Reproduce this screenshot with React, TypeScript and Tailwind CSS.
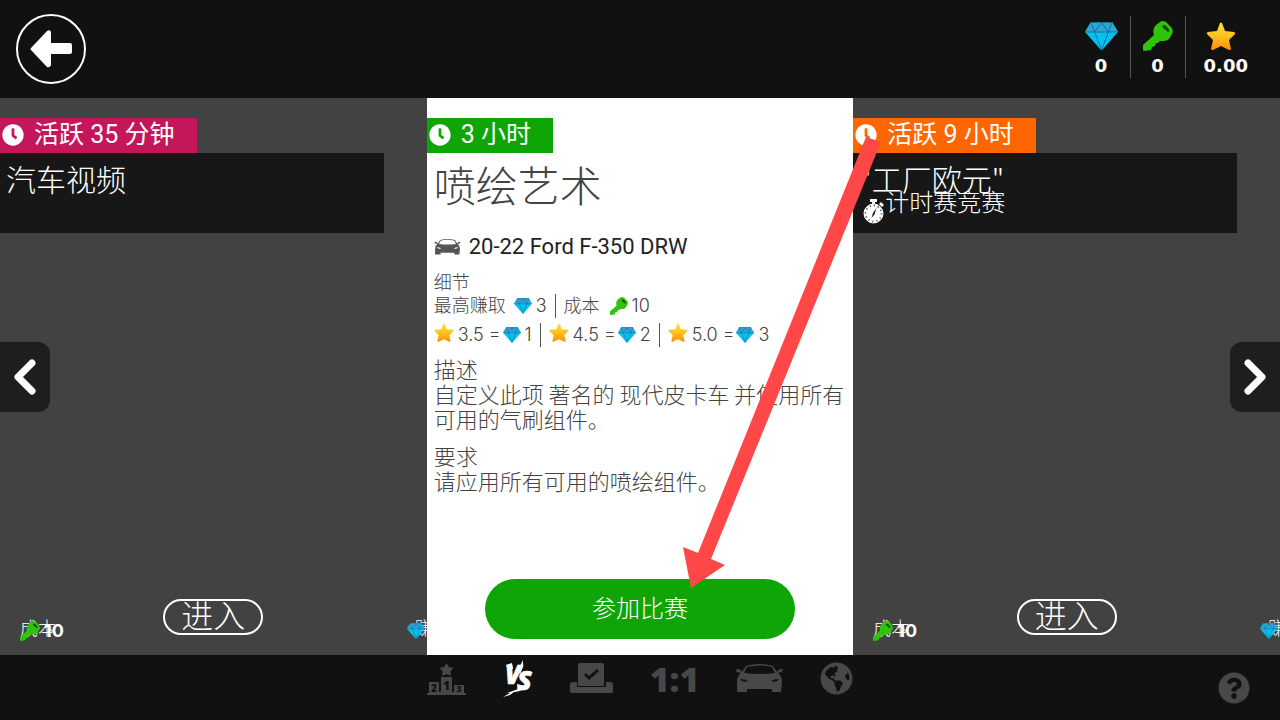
import React from 'react';
import { FaClock, FaGlobeAmericas, FaQuestionCircle } from 'react-icons/fa';

interface IconProps {
  className?: string;
}

const cjk = "font-['Noto_Sans_CJK_SC',sans-serif]";

const DiamondIcon: React.FC<IconProps> = ({ className }) => (
  <svg viewBox="0 0 33 28" className={className} aria-hidden="true">
    <path d="M6 0H27L33 10L17 28H16L0 10Z" fill="#08bff0" />
    <path d="M6 0H27L33 10H0Z" fill="#2da5d8" />
    <path
      d="M0.500 10H32.500M6 .500L9.500 10L16.500 27.500L23.500 10L27 .500M9.500 10L16.500 1L23.500 10M6 .500H27"
      fill="none"
      stroke="#0d6688"
      strokeWidth=".8"
    />
  </svg>
);

const KeyIcon: React.FC<IconProps> = ({ className }) => (
  <svg viewBox="0 0 30 30" className={className} aria-hidden="true">
    <path
      d="M13 4L17 1Q20-1 23 1L28 6Q31 9 29 13L26 18Q24 20 21 20L17 20L15 22L13 22L12 25L9 26L8 29L1 30L0 29L0 24L11 14Q9 8 13 4Z"
      fill="#2dc40a"
    />
    <path d="M19.500 4.500Q21 3 23 5L26 8.500Q27 10.500 25 11Q23 9 19.500 6.500Z" fill="#0c4d05" />
  </svg>
);

const StarIcon: React.FC<IconProps> = ({ className }) => (
  <svg viewBox="0 0 30 28" className={className} aria-hidden="true">
    <defs>
      <linearGradient id="gold" x1="0" y1="0" x2="0" y2="1">
        <stop offset="0" stopColor="#ffdf3a" />
        <stop offset=".45" stopColor="#ffc423" />
        <stop offset="1" stopColor="#ff8f00" />
      </linearGradient>
    </defs>
    <path
      d="M14 1Q15 0 16 1L19 9L28 10Q30 11 29 12L23 18L25 27Q25 28 23 28L15 24L7 28Q5 28 5 27L7 18L1 12Q0 11 2 10L11 9Z"
      fill="url(#gold)"
    />
  </svg>
);

const CarIcon: React.FC<IconProps> = ({ className }) => (
  <svg viewBox="0 0 47 29" className={className} fill="currentColor" aria-hidden="true">
    <path
      fillRule="evenodd"
      d="M10 2Q23-2 37 2L41 8Q42 5 46 5Q48 7 45 8L42 9Q46 12 46 18L45 28H36V25H11V28H1L1 18Q1 12 5 9L1 8Q-1 6 1 5Q5 5 6 8ZM11 3L8 9Q23 11 39 9L36 3Q23 0 11 3ZM4 15Q6 19 12 17Q10 15 4 15ZM43 15Q41 19 35 17Q37 15 43 15Z"
    />
  </svg>
);

const PodiumIcon: React.FC<IconProps> = ({ className }) => (
  <svg viewBox="0 0 39 32" className={className} fill="currentColor" aria-hidden="true">
    <path d="M19.500 0L21.800 4L26.500 5L23.400 8.400L24 13L19.500 11L15 13L15.600 8.400L12.500 5L17.200 4Z" />
    <path d="M0 30H2V19H12V29H14V14H25V29H27V22H37V30H39V32H0Z" />
    <g fill="#111" fontFamily="Open Sans, sans-serif" fontWeight="800" textAnchor="middle">
      <text x="7" y="28.500" fontSize="10">2</text>
      <text x="19.500" y="27" fontSize="12">1</text>
      <text x="32" y="29" fontSize="8">3</text>
    </g>
  </svg>
);

const VersusIcon: React.FC<IconProps> = ({ className }) => (
  <svg viewBox="0 0 30 37" className={className} fill="currentColor" aria-hidden="true">
    <g fontFamily="Open Sans, sans-serif" fontStyle="italic" fontWeight="800" stroke="currentColor" strokeWidth=".6">
      <text x="2" y="24" fontSize="26">V</text>
      <text x="14" y="30" fontSize="27">S</text>
    </g>
    <path d="M0 37L7 33L4 33L15 29L22 29Q15 32 11 32L7 35Z" />
    <path d="M15 10L20 0L20 7L17 14Z" />
    <path d="M3 5L9 3L10 9L5 9Z" />
  </svg>
);

const BallotIcon: React.FC<IconProps> = ({ className }) => (
  <svg viewBox="0 0 43 31" className={className} fill="currentColor" aria-hidden="true">
    <path
      fillRule="evenodd"
      d="M10 0H32Q34 0 34 2V23H8V2Q8 0 10 0ZM14 12L19 17L29 8L27 6L19 13L16 10Z"
    />
    <path d="M3 19H7V24H36V19H40Q43 19 43 22V28Q43 30 41 30H2Q0 30 0 28V22Q0 19 3 19Z" />
  </svg>
);

const StopwatchIcon: React.FC<IconProps> = ({ className }) => (
  <svg viewBox="0 0 22 25" className={className} aria-hidden="true">
    <path d="M7 0H14V3H12V5H9V3H7ZM16 5L18 3L21 6L19 8Z" fill="#fff" />
    <circle cx="10.500" cy="14.500" r="9.500" fill="#fff" stroke="#fff" />
    <circle cx="10.500" cy="14.500" r="8" fill="none" stroke="#171717" strokeWidth="1.500" strokeDasharray="1 3.190" />
    <path d="M13.500 9L11.500 15.500L8.500 19L10 14Z" fill="#171717" />
  </svg>
);

const Tag: React.FC<{ color: string; children: React.ReactNode }> = ({ color, children }) => (
  <div className={`mt-5 flex h-[35px] w-fit items-center gap-2.5 pb-0.5 pl-0.5 pr-[22px] text-white ${color}`}>
    <FaClock className="size-[22px]" />
    <span className="font-['Roboto','Noto_Sans_CJK_SC',sans-serif] text-[25px] leading-8">{children}</span>
  </div>
);

const SideCard: React.FC<{
  tag: string;
  color: string;
  title: string;
  subtitle?: string;
}> = ({ tag, color, title, subtitle }) => (
  <article className="relative flex flex-col items-start overflow-hidden bg-[#424242] text-white">
    <Tag color={color}>{tag}</Tag>
    <div className="h-20 w-9/10 bg-[#171717] px-1.5 pt-2.5">
      <h2 className="text-[30px] font-light leading-[30px]">{title}</h2>
      {subtitle && (
        <div className="-mt-1 flex items-start pl-1">
          <StopwatchIcon className="mt-2.5 h-[25px] w-[22px]" />
          <p className="text-2xl font-light leading-6">{subtitle}</p>
        </div>
      )}
    </div>
    <button className="mb-5 mt-auto flex h-9 w-[100px] items-center justify-center self-center rounded-full border-2 border-white pb-1.5 text-[32px] font-light leading-none">
      进入
    </button>
    <div className="absolute bottom-4 left-5 text-lg font-light leading-6">
      成本
      <KeyIcon className="absolute -bottom-0.5 left-0 size-5" />
      <span className="absolute left-6 top-1 font-['Inter',sans-serif] text-lg font-bold leading-6">10</span>
    </div>
    <div className="absolute -right-6 bottom-4 text-lg font-light leading-6">
      赚取
      <DiamondIcon className="absolute bottom-0 -left-2 h-4 w-[18px]" />
    </div>
  </article>
);

const Reward: React.FC<{ stars: string; gems: number }> = ({ stars, gems }) => (
  <span className="flex items-center">
    <StarIcon className="mb-1 mr-1 h-[19px] w-5" />
    {stars} =
    <DiamondIcon className="ml-0.5 mr-1 h-4 w-[18px]" />
    {gems}
  </span>
);

const Divider = () => <span className="mx-2 h-6 w-px bg-[#555]" />;

const Stat: React.FC<{ icon: React.ReactNode; value: string; className: string }> = ({ icon, value, className }) => (
  <div className={`flex h-[62px] flex-col items-center ${className}`}>
    <span className="flex h-10 items-center">{icon}</span>
    <span className="font-['DejaVu_Sans',sans-serif] text-lg font-bold leading-5">{value}</span>
  </div>
);

const tabs = [
  { label: 'Leaderboard', icon: <PodiumIcon className="h-8 w-[39px]" /> },
  { label: 'Versus', icon: <VersusIcon className="h-[37px] w-[30px] overflow-visible" />, active: true },
  { label: 'Vote', icon: <BallotIcon className="h-[31px] w-[43px]" /> },
  { label: 'Scale', icon: <span className="font-['Open_Sans',sans-serif] text-[34px] font-extrabold leading-8">1:1</span> },
  { label: 'Cars', icon: <CarIcon className="h-[29px] w-[47px]" /> },
  { label: 'World', icon: <FaGlobeAmericas className="size-[33px]" /> },
];

const App: React.FC = () => {
  return (
    <div className={`flex min-h-screen flex-col bg-[#111] ${cjk}`}>
      <header className="flex items-center justify-between py-3.5 pl-4 pr-8 text-white">
        <button aria-label="Back" className="flex size-[70px] items-center justify-center rounded-full border-2 border-white">
          <svg viewBox="0 0 42 38" className="h-[38px] w-[42px]" fill="currentColor" aria-hidden="true">
            <path d="M17 1Q20-1 21 2V13H40Q42 13 42 15V22Q42 24 40 24H21V35Q20 38 17 37L1 20Q0 19 1 18Z" />
          </svg>
        </button>
        <div className="mt-0.5 flex divide-x divide-[#555] self-start">
          <Stat className="pr-3" icon={<DiamondIcon className="h-7 w-[33px]" />} value="0" />
          <Stat className="px-3" icon={<KeyIcon className="size-[30px]" />} value="0" />
          <Stat className="pl-[18px]" icon={<StarIcon className="mr-2.5 h-7 w-[30px]" />} value="0.00" />
        </div>
      </header>

      <main className="relative grid flex-1 grid-cols-3">
        <SideCard tag="活跃 35 分钟" color="bg-[#c4175b]" title="汽车视频" />

        <article className="relative flex flex-col items-start bg-white text-[#444]">
          <Tag color="bg-[#0fa506]">3 小时</Tag>
          <div className="w-full px-[7px] font-light">
            <h1 className="pt-1 text-[42px] leading-[54px]">喷绘艺术</h1>
            <p className="mt-[22px] flex items-center gap-2 font-['Roboto',sans-serif] text-[22px] font-normal leading-7 text-[#222]">
              <CarIcon className="h-4 w-[27px] text-[#555]" />
              20-22 Ford F-350 DRW
            </p>
            <h3 className="mt-2.5 text-lg leading-5">细节</h3>
            <div className="flex h-[29px] items-center font-['Inter',sans-serif] text-lg">
              <span className={`pb-1 ${cjk}`}>最高赚取</span>
              <DiamondIcon className="ml-2 mr-1 h-4 w-[18px]" />3
              <Divider />
              <span className={`pb-1 ${cjk}`}>成本</span>
              <KeyIcon className="ml-2.5 mr-1 size-[18px]" />
              10
            </div>
            <div className="flex h-[29px] items-center font-['Inter',sans-serif] text-lg">
              <Reward stars="3.5" gems={1} />
              <Divider />
              <Reward stars="4.5" gems={2} />
              <Divider />
              <Reward stars="5.0" gems={3} />
            </div>
            <div className="mt-[7px] text-[22px] leading-[25px]">
              <h3>描述</h3>
              <p>自定义此项 著名的 现代皮卡车 并使用所有可用的气刷组件。</p>
              <h3 className="mt-3">要求</h3>
              <p>请应用所有可用的喷绘组件。</p>
            </div>
          </div>
          <button className="mb-4 mt-auto h-[60px] w-[310px] self-center rounded-full bg-[#0fa506] pb-1 text-2xl font-light text-white">
            参加比赛
          </button>
          {/* pointer towards the join button */}
          <svg
            viewBox="683 137 198 451"
            className="pointer-events-none absolute -right-7 top-[39px] z-20 h-[451px] w-[198px]"
            aria-hidden="true"
          >
            <path d="M866 137L881 142L711 559L725 565L691 588L683 547L698 553Z" fill="#ff4747" />
          </svg>
        </article>

        <SideCard tag="活跃 9 小时" color="bg-[#ff6600]" title={'"工厂欧元"'} subtitle="计时赛竞赛" />

        <button
          aria-label="Previous"
          className="absolute left-0 top-1/2 flex h-[70px] w-[50px] -translate-y-1/2 items-center justify-center rounded-r-xl bg-[#1e1e1e]"
        >
          <svg viewBox="0 0 22 36" className="h-9 w-[22px]" fill="none" stroke="#fff" strokeWidth="7" strokeLinecap="round" aria-hidden="true">
            <path d="M18 4L4 18L18 32" strokeLinejoin="round" />
          </svg>
        </button>
        <button
          aria-label="Next"
          className="absolute right-0 top-1/2 flex h-[70px] w-[50px] -translate-y-1/2 items-center justify-center rounded-l-xl bg-[#1e1e1e]"
        >
          <svg viewBox="0 0 22 36" className="h-9 w-[22px]" fill="none" stroke="#fff" strokeWidth="7" strokeLinecap="round" aria-hidden="true">
            <path d="M4 4L18 18L4 32" strokeLinejoin="round" />
          </svg>
        </button>
      </main>

      <footer className="grid grid-cols-3 text-[#484848]">
        <nav className="col-start-2 flex items-start justify-between pb-6 pt-1.5">
          {tabs.map((tab) => (
            <button
              key={tab.label}
              aria-label={tab.label}
              className={`flex h-[35px] items-center ${tab.active ? 'text-white' : ''}`}
            >
              {tab.icon}
            </button>
          ))}
        </nav>
        <button aria-label="Help" className="mr-[30px] self-center justify-self-end">
          <FaQuestionCircle className="size-8" />
        </button>
      </footer>
    </div>
  );
};

export default App;
